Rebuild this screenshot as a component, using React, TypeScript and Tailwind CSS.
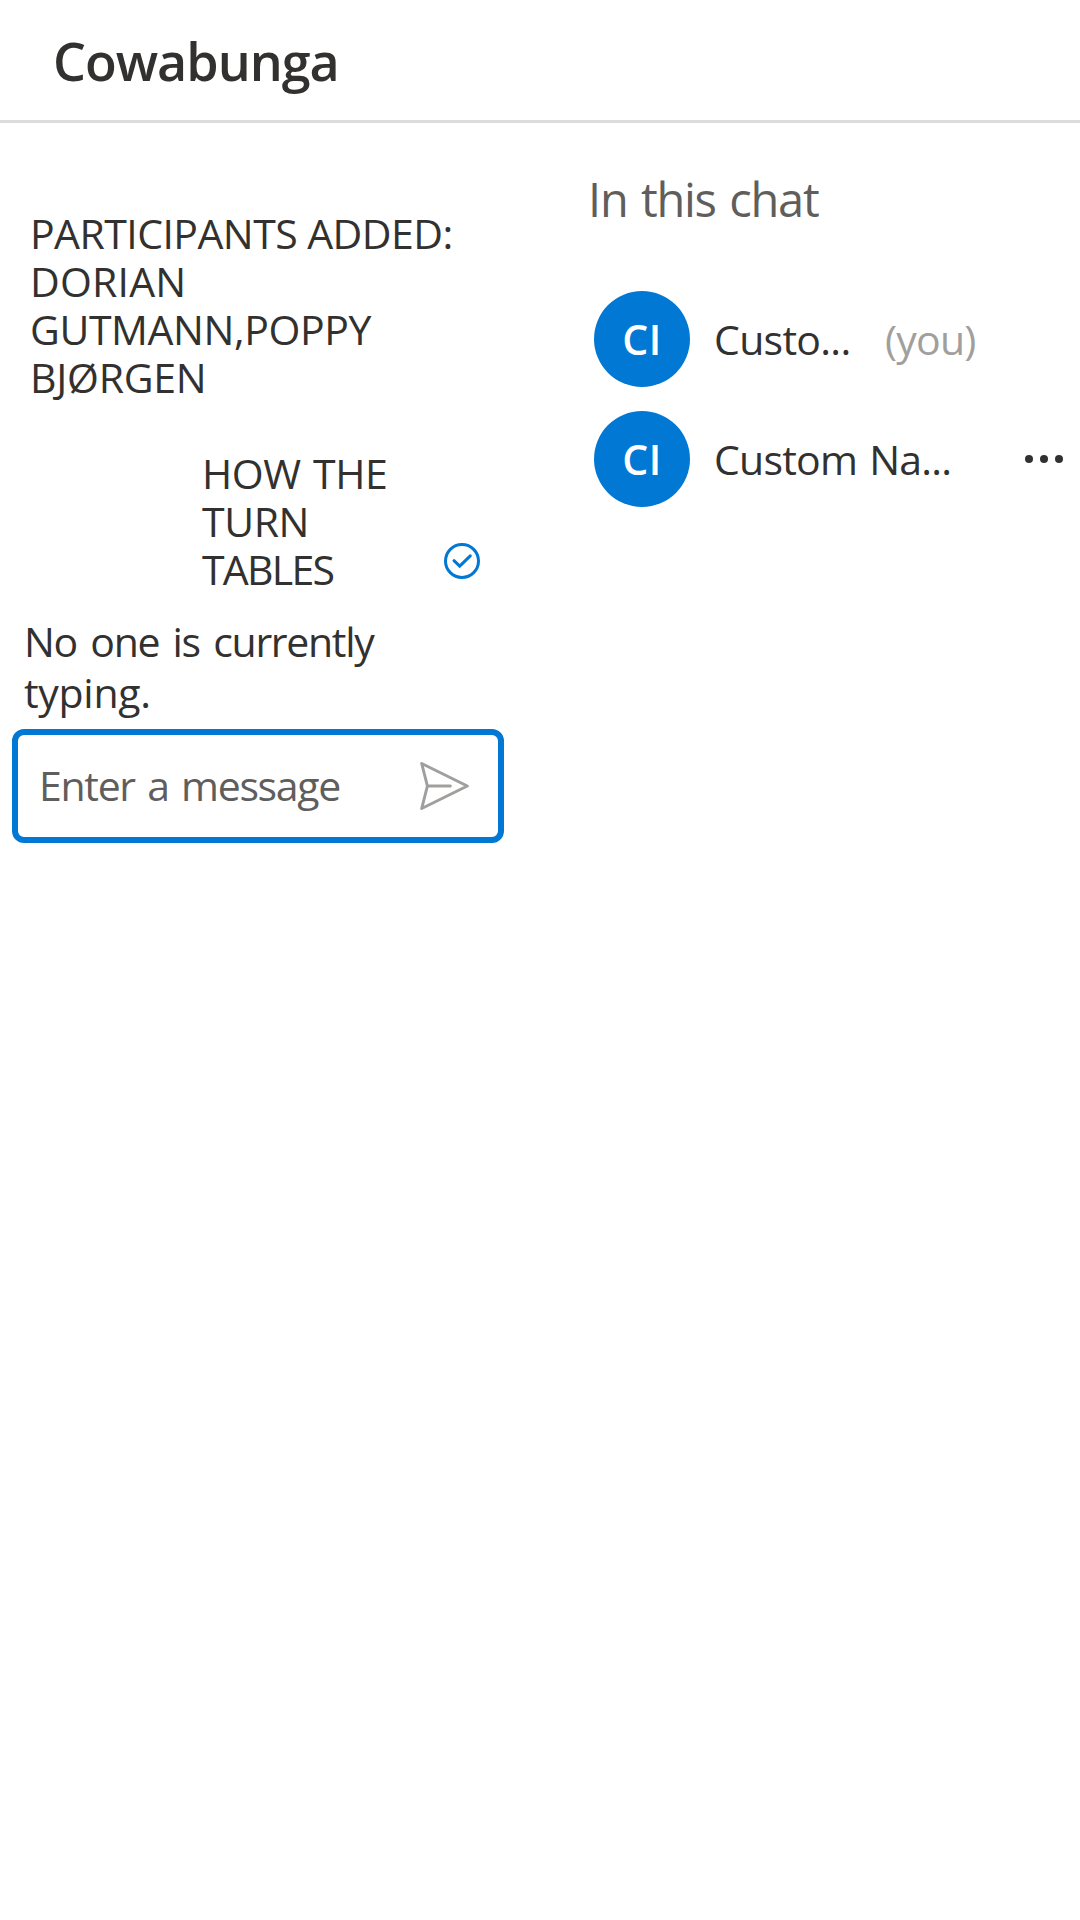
function Avatar() {
  return (
    <div className="flex size-24 shrink-0 items-center justify-center rounded-full bg-[#0078d4] text-[41px] leading-[60px] font-semibold tracking-[0.5px] text-white">
      CI
    </div>
  );
}

function CheckIcon() {
  return (
    <svg className="size-9 shrink-0" viewBox="0 0 36 36" fill="none" stroke="#0078d4" strokeWidth="3">
      <circle cx="18" cy="18" r="16.5" />
      <path d="M10 17.7 15.7 23.2 26.3 12.9" strokeLinecap="round" />
    </svg>
  );
}

function SendIcon() {
  return (
    <svg className="h-12 w-[50px] shrink-0" viewBox="0 0 50 48" fill="none" stroke="#a19f9d" strokeWidth="3" strokeLinecap="round" strokeLinejoin="round">
      <path d="M1.7 1.5 47.3 24 1.7 46.5 7.4 24ZM7.4 24H30.3" />
    </svg>
  );
}

export default function App() {
  return (
    <div className="h-[1920px] w-[1080px] overflow-hidden bg-white font-['Open_Sans',sans-serif] text-[41px] text-[#323130]">
      <header className="flex h-[123px] items-center border-b-[3px] border-[#dcdcdc] pt-[2px] pl-[53px]">
        <h1 className="text-[52px] leading-[72px] font-semibold tracking-[-1px]">Cowabunga</h1>
      </header>

      <main className="flex">
        <section className="w-[516px] px-3 pt-[86px]">
          <p className="pl-[18px] leading-[48px] whitespace-nowrap">
            <span className="block tracking-[-0.55px]">PARTICIPANTS ADDED:</span>
            <span className="block tracking-[0.2px]">DORIAN</span>
            <span className="block tracking-[-0.4px]">GUTMANN,POPPY</span>
            <span className="block tracking-[-0.25px]">BJØRGEN</span>
          </p>

          <div className="mt-12 flex items-end justify-between pr-6 pl-[190px]">
            <p className="leading-[48px] whitespace-nowrap">
              <span className="block tracking-[-0.4px] [word-spacing:2px]">HOW THE</span>
              <span className="block tracking-[-0.4px]">TURN</span>
              <span className="block tracking-[-1.75px]">TABLES</span>
            </p>
            <div className="pb-[14px]">
              <CheckIcon />
            </div>
          </div>

          <p className="mt-[23px] pl-[12px] leading-[51px] whitespace-nowrap">
            <span className="block tracking-[-1.3px] [word-spacing:4px]">No one is currently</span>
            <span className="block tracking-[-0.3px]">typing.</span>
          </p>

          <div className="mt-[11px] flex h-[114px] items-center justify-between rounded-xl border-[6px] border-[#0078d4] pr-[28px] pl-[21px]">
            <span className="tracking-[-1.3px] text-[#605e5c] [word-spacing:3px]">Enter a message</span>
            <SendIcon />
          </div>
        </section>

        <aside className="flex-1 pt-[43px] pl-[72px]">
          <h2 className="text-[47px] leading-[66px] tracking-[-1.25px] text-[#605e5c] [word-spacing:2.5px]">In this chat</h2>
          <ul className="mt-[59px] flex flex-col gap-6 pl-1.5 leading-[60px] whitespace-nowrap">
            <li className="flex items-center">
              <Avatar />
              <span className="ml-6 w-[171px] tracking-[-0.7px]">Custo...</span>
              <span className="tracking-[-0.8px] text-[#a19f9d]">(you)</span>
            </li>
            <li className="flex items-center">
              <Avatar />
              <span className="ml-6 w-[311px] tracking-[-0.75px] [word-spacing:2px]">Custom Na...</span>
              <div className="flex gap-[7px]">
                <i className="size-2 rounded-full bg-[#323130]" />
                <i className="size-2 rounded-full bg-[#323130]" />
                <i className="size-2 rounded-full bg-[#323130]" />
              </div>
            </li>
          </ul>
        </aside>
      </main>
    </div>
  );
}
